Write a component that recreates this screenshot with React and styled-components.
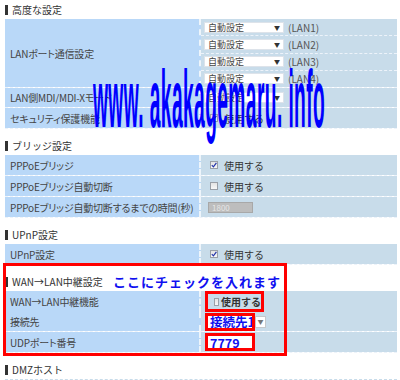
import React from 'react';
import styled, { createGlobalStyle } from 'styled-components';

const GlobalStyle = createGlobalStyle`
  html, body {
    margin: 0;
    padding: 0;
    background: #fff;
  }
  body {
    width: 400px;
    height: 380px;
    overflow: hidden;
    font-family: "Noto Sans CJK JP", "Liberation Sans", sans-serif;
    color: #3c3c3c;
  }
`;

const Page = styled.div`
  position: relative;
  width: 400px;
  height: 380px;
  overflow: hidden;
`;

const Section = styled.section`
  margin-top: ${props => props.$gap || 0}px;
`;

const SectionTitle = styled.div`
  display: flex;
  align-items: center;
  height: 19px;
  padding-left: 5px;
  font-size: 10px;
  color: #333;
  white-space: nowrap;

  &::before {
    content: '';
    width: 3px;
    height: 10px;
    background: #333;
    margin-right: 4px;
  }
`;

const Note = styled.span`
  margin-left: 10px;
  font-size: 13px;
  font-weight: 700;
  letter-spacing: 1px;
  color: #1010f0;
`;

const Table = styled.div`
  margin-left: 5px;
  width: 392px;
`;

const Row = styled.div`
  display: grid;
  grid-template-columns: 196px 1fr;
  height: ${props => props.$h || 21}px;
  box-sizing: border-box;
  border-bottom: 1px dashed #edf3fa;
`;

const Label = styled.div`
  display: flex;
  align-items: center;
  padding-left: 5px;
  background: #b9d8f8;
  border-right: 2px dashed #eef5fb;
  font-size: 10px;
  letter-spacing: -0.2px;
  font-feature-settings: "palt";
  color: #444;
  white-space: nowrap;
  overflow: hidden;
`;

const Value = styled.div`
  display: flex;
  align-items: center;
  gap: 4px;
  padding-left: 3px;
  background: #c8dcea;
  font-size: 10px;
  white-space: nowrap;
`;

const Stack = styled.div`
  display: flex;
  flex-direction: column;
  background: #c8dcea;
`;

const SubRow = styled.div`
  flex: 1;
  display: flex;
  align-items: center;
  gap: 4px;
  padding-left: 3px;
  font-size: 10px;
  border-bottom: 1px dashed #edf3fa;

  &:last-child {
    border-bottom: none;
  }
`;

const FakeSelect = styled.div`
  display: flex;
  align-items: center;
  justify-content: space-between;
  width: 80px;
  height: 11px;
  box-sizing: border-box;
  padding: 0 3px 0 3px;
  background: #fff;
  border: 1px solid #dde3ea;
  font-size: 9px;
  color: #444;
`;

const Arrow = styled.span`
  font-size: 6px;
  color: #333;
`;

const Port = styled.span`
  font-size: 10px;
  color: #555;
`;

const Check = styled.span`
  display: inline-flex;
  align-items: center;
  justify-content: center;
  width: 8px;
  height: 8px;
  margin-left: 6px;
  margin-right: 2px;
  box-sizing: border-box;
  border: 1px solid #9aa0a8;
  background: linear-gradient(#e4e4e4, #f8f8f8);
`;

const CheckText = styled.span`
  font-size: 10px;
  color: #333;
`;

const Disabled = styled.div`
  width: 45px;
  height: 11px;
  margin-left: 4px;
  box-sizing: border-box;
  padding-left: 3px;
  background: #bdbdbd;
  border: 1px solid #a8a8a8;
  font-size: 8px;
  line-height: 9px;
  color: #e6e6e6;
`;

const Marked = styled.div`
  display: flex;
  align-items: center;
  width: ${props => props.$w}px;
  height: ${props => props.$h}px;
  margin-left: 1px;
  box-sizing: border-box;
  border: 3px solid #ff0000;
  background: ${props => (props.$white ? '#fff' : 'transparent')};
  font-size: 12.5px;
  font-weight: 700;
  color: #1010f0;
  padding-left: ${props => (props.$white ? 2 : 0)}px;
  overflow: hidden;
  white-space: nowrap;
`;

const ArrowBox = styled.span`
  display: inline-flex;
  align-items: center;
  justify-content: center;
  width: 11px;
  height: 12px;
  margin-left: -4px;
  box-sizing: border-box;
  background: #fff;
  border: 1px solid #c4c8cc;
  font-size: 6px;
  color: #777;
`;

const BottomLine = styled.div`
  margin-left: 5px;
  width: 392px;
  border-top: 1px dashed #c8dcea;
`;

const Watermark = styled.div`
  position: absolute;
  left: 93px;
  top: 59px;
  font-family: "Liberation Sans", Arial, sans-serif;
  font-weight: 700;
  font-size: 24px;
  line-height: 1;
  letter-spacing: 0.5px;
  color: #0000ff;
  white-space: pre;
  transform: scale(0.8, 3.4);
  transform-origin: left top;
  pointer-events: none;
`;

const Annotation = styled.div`
  position: absolute;
  left: 3px;
  top: 263px;
  width: 284px;
  height: 93px;
  box-sizing: border-box;
  border: 3px solid #ff0000;
  pointer-events: none;
`;

const Tick = () => (
  <svg width="6" height="6" viewBox="0 0 6 6">
    <path d="M0.8 3.2 L2.4 4.8 L5.4 0.8" fill="none" stroke="#2233aa" strokeWidth="1.2" />
  </svg>
);

const CheckBox = ({ checked }) => (
  <>
    <Check>{checked && <Tick />}</Check>
    <CheckText>使用する</CheckText>
  </>
);

const lanPorts = ['LAN1', 'LAN2', 'LAN3', 'LAN4'];

const App = () => (
  <Page>
    <GlobalStyle />

    <Section>
      <SectionTitle>高度な設定</SectionTitle>
      <Table>
        <Row $h={69}>
          <Label>LANポート通信設定</Label>
          <Stack>
            {lanPorts.map(port => (
              <SubRow key={port}>
                <FakeSelect>
                  自動設定<Arrow>▼</Arrow>
                </FakeSelect>
                <Port>({port})</Port>
              </SubRow>
            ))}
          </Stack>
        </Row>
        <Row $h={20}>
          <Label>LAN側MDI/MDI-Xモード</Label>
          <Value>
            <FakeSelect>自動設定<Arrow>▼</Arrow></FakeSelect>
          </Value>
        </Row>
        <Row>
          <Label>セキュリティ保護機能</Label>
          <Value>
            <CheckBox checked />
          </Value>
        </Row>
      </Table>
    </Section>

    <Section $gap={7}>
      <SectionTitle>ブリッジ設定</SectionTitle>
      <Table>
        <Row>
          <Label>PPPoEブリッジ</Label>
          <Value>
            <CheckBox checked />
          </Value>
        </Row>
        <Row>
          <Label>PPPoEブリッジ自動切断</Label>
          <Value>
            <CheckBox />
          </Value>
        </Row>
        <Row>
          <Label>PPPoEブリッジ自動切断するまでの時間(秒)</Label>
          <Value>
            <Disabled>1800</Disabled>
          </Value>
        </Row>
      </Table>
    </Section>

    <Section $gap={7}>
      <SectionTitle>UPnP設定</SectionTitle>
      <Table>
        <Row>
          <Label>UPnP設定</Label>
          <Value>
            <CheckBox checked />
          </Value>
        </Row>
      </Table>
    </Section>

    <Section $gap={7}>
      <SectionTitle>
        WAN→LAN中継設定
        <Note>ここにチェックを入れます</Note>
      </SectionTitle>
      <Table>
        <Row>
          <Label>WAN→LAN中継機能</Label>
          <Value>
            <Marked $w={59} $h={21}>
              <CheckBox />
            </Marked>
          </Value>
        </Row>
        <Row $h={20}>
          <Label>接続先</Label>
          <Value>
            <Marked $w={50} $h={18} $white>接続先1</Marked>
            <ArrowBox>▼</ArrowBox>
          </Value>
        </Row>
        <Row>
          <Label>UDPポート番号</Label>
          <Value>
            <Marked $w={50} $h={18} $white>7779</Marked>
          </Value>
        </Row>
      </Table>
    </Section>

    <Section $gap={7}>
      <SectionTitle>DMZホスト</SectionTitle>
      <BottomLine />
    </Section>

    <Watermark>www. akakagemaru. info</Watermark>
    <Annotation />
  </Page>
);

export default App;
